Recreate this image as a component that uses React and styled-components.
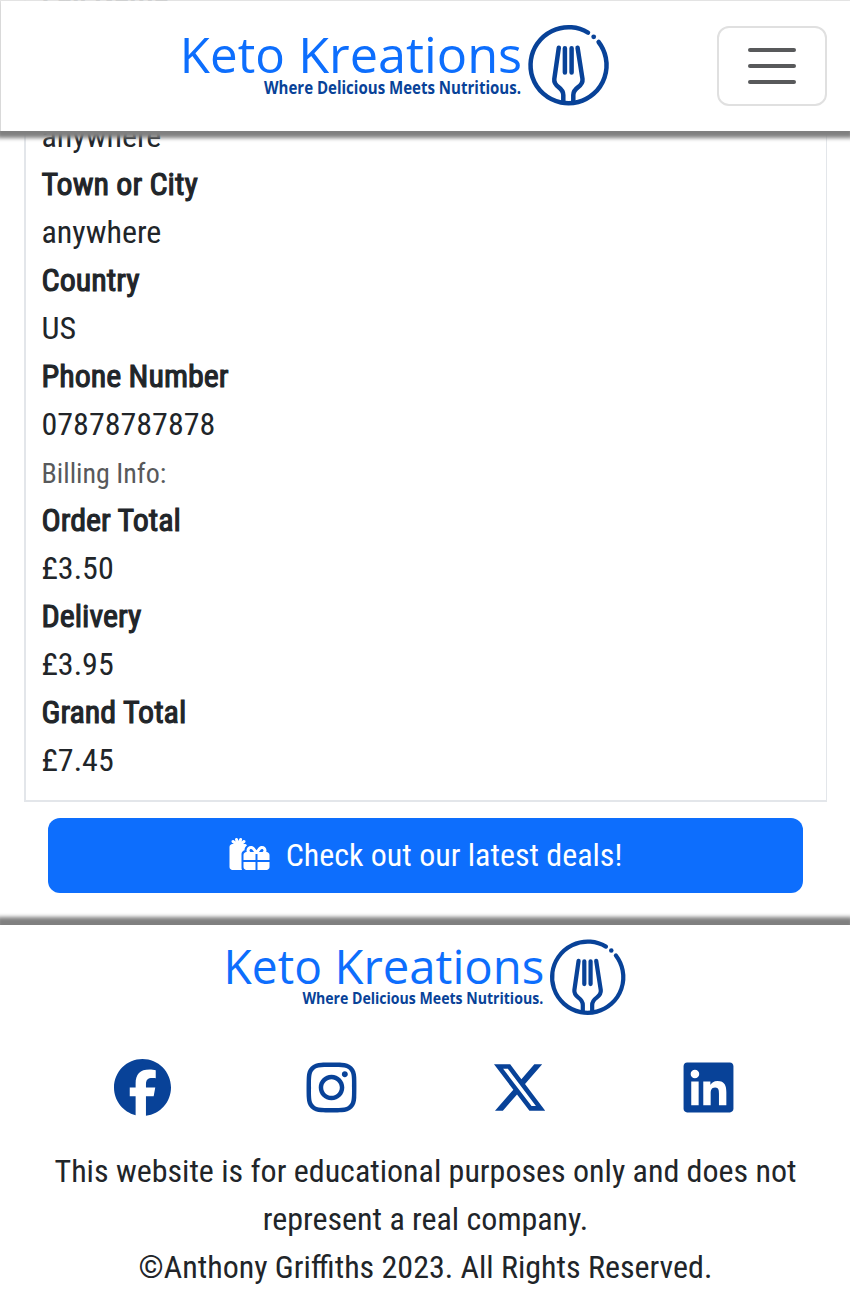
import React from "react";
import styled, { createGlobalStyle } from "styled-components";
import { FaFacebook, FaGifts, FaInstagram, FaLinkedin, FaXTwitter } from "react-icons/fa6";

const GlobalStyle = createGlobalStyle`
  * { box-sizing: border-box; }
  body {
    margin: 0;
    background: #fff;
    color: #212529;
    font-family: "Roboto Condensed", Roboto, sans-serif;
    font-stretch: 75%;
    font-size: 32px;
    line-height: 48px;
  }
`;

const Page = styled.div`
  position: relative;
  height: 1298px;
  overflow: hidden;
`;

const Header = styled.header`
  position: absolute;
  inset: 0 0 auto 0;
  z-index: 2;
  height: 131px;
  padding: 0 23px 1px 174px;
  display: flex;
  align-items: center;
  justify-content: space-between;
  background: #fff;
  background-clip: padding-box;
  border: 1px solid rgba(232, 232, 232, 0.85);
  border-width: 1px 0 0 1px;
  box-shadow: 0 4px 4px 3px #808080;
`;

const MenuButton = styled.button`
  width: 110px;
  height: 80px;
  padding: 1px 0 0;
  display: flex;
  flex-direction: column;
  align-items: center;
  justify-content: center;
  gap: 12px;
  background: #fff;
  border: 2px solid #e0e0e0;
  border-radius: 12px;
`;

const MenuLine = styled.span`
  width: 48px;
  height: 4px;
  border-radius: 2px;
  background: #58595b;
`;

const Main = styled.main`
  height: 925px;
  padding: 0 23px 32px 24px;
  display: flex;
  flex-direction: column;
  justify-content: flex-end;
`;

const OrderCard = styled.section`
  flex: none;
  padding: 16px 15.5px;
  border: 2px solid #e3e6ea;
  border-right-width: 1px;
`;

const Details = styled.dl`
  margin: 0;
`;

const Label = styled.dt`
  -webkit-text-stroke: 1.1px currentColor;
`;

const Value = styled.dd`
  margin: 0;
`;

const SectionTitle = styled.dt`
  padding-top: 4px;
  font-size: 28px;
  line-height: 44px;
  color: #58595b;
`;

const DealsButton = styled.a`
  flex: none;
  height: 75px;
  margin: 16px 24px 0;
  padding-bottom: 2px;
  display: flex;
  align-items: center;
  justify-content: center;
  gap: 16px;
  background: #0d6efd;
  border-radius: 12px;
  color: #fff;
`;

const GiftsIcon = styled(FaGifts)`
  width: 41px;
  height: 32px;
  margin-top: -1px;
`;

const Footer = styled.footer`
  position: relative;
  height: 373px;
  padding: 15px 47px 0 48px;
  background: #fff;
  box-shadow: 0 -5px 4px 3px #808080;
  text-align: center;
`;

const FooterLogo = styled.div`
  height: 75px;
  margin-left: -1px;
  display: flex;
  align-items: center;
  justify-content: center;
`;

const Socials = styled.nav`
  height: 57px;
  margin: 44px 0 31px;
  display: grid;
  grid-template-columns: repeat(4, 1fr);
  place-items: center;
  color: #084298;
  font-size: 57px;
`;

const Notice = styled.p`
  margin: 0 -16px;
`;

const LogoSvg = styled.svg`
  display: block;
  flex: none;
  margin-top: -1px;
`;

const LogoText = styled.text`
  font-family: "Open Sans", sans-serif;
  font-stretch: normal;
  font-size: ${(p) => p.$size}px;
  font-weight: ${(p) => (p.$bold ? 700 : 400)};
  fill: ${(p) => (p.$bold ? "#084298" : "#0d6efd")};
`;

function Logo({ scale }) {
  return (
    <LogoSvg width={440 * scale} height={96 * scale} viewBox="-6 -8 440 96">
      <LogoText $size={50} x="-1.2" y="47.6" textLength="105" lengthAdjust="spacingAndGlyphs">Keto</LogoText>
      <LogoText $size={50} x="117.2" y="47.6" textLength="224" lengthAdjust="spacingAndGlyphs">Kreations</LogoText>
      <LogoText $size={17} $bold x="83" y="69" textLength="257" lengthAdjust="spacingAndGlyphs">Where Delicious Meets Nutritious.</LogoText>
      <g fill="none" stroke="#084298" strokeWidth="4.5" strokeLinecap="round" strokeLinejoin="round">
        <path d="M407 7.6A38 38 0 1 0 417.6 17" />
        <path d="M382.3 76V70C382.3 61 372.4 63 373.3 54L377.8 22.8" />
        <path d="M392.3 76V70C392.3 61 402.4 63 401.5 54L396.6 22.8" />
        <path d="M383.9 23.3V47.6M390.6 23.3V47.6" />
      </g>
      <circle cx="412.7" cy="11.8" r="2.4" fill="#084298" />
    </LogoSvg>
  );
}

const details = [
  ["Full Name", "Anthony"],
  ["Street Address", "anywhere"],
  ["Town or City", "anywhere"],
  ["Country", "US"],
  ["Phone Number", "07878787878"],
];

const billing = [
  ["Order Total", "£3.50"],
  ["Delivery", "£3.95"],
  ["Grand Total", "£7.45"],
];

function DetailRows({ rows }) {
  return rows.map(([label, value]) => (
    <React.Fragment key={label}>
      <Label>{label}</Label>
      <Value>{value}</Value>
    </React.Fragment>
  ));
}

export default function App() {
  return (
    <>
      <GlobalStyle />
      <Page>
        <Header>
          <Logo scale={1} />
          <MenuButton aria-label="Toggle navigation">
            <MenuLine />
            <MenuLine />
            <MenuLine />
          </MenuButton>
        </Header>
        <Main>
          <OrderCard>
            <Details>
              <DetailRows rows={details} />
              <SectionTitle>Billing Info:</SectionTitle>
              <DetailRows rows={billing} />
            </Details>
          </OrderCard>
          <DealsButton>
            <GiftsIcon />
            <span>Check out our latest deals!</span>
          </DealsButton>
        </Main>
        <Footer>
          <FooterLogo>
            <Logo scale={0.937} />
          </FooterLogo>
          <Socials>
            <FaFacebook />
            <FaInstagram />
            <FaXTwitter />
            <FaLinkedin />
          </Socials>
          <Notice>This website is for educational purposes only and does not represent a real company.</Notice>
          <Notice>©Anthony Griffiths 2023. All Rights Reserved.</Notice>
        </Footer>
      </Page>
    </>
  );
}
